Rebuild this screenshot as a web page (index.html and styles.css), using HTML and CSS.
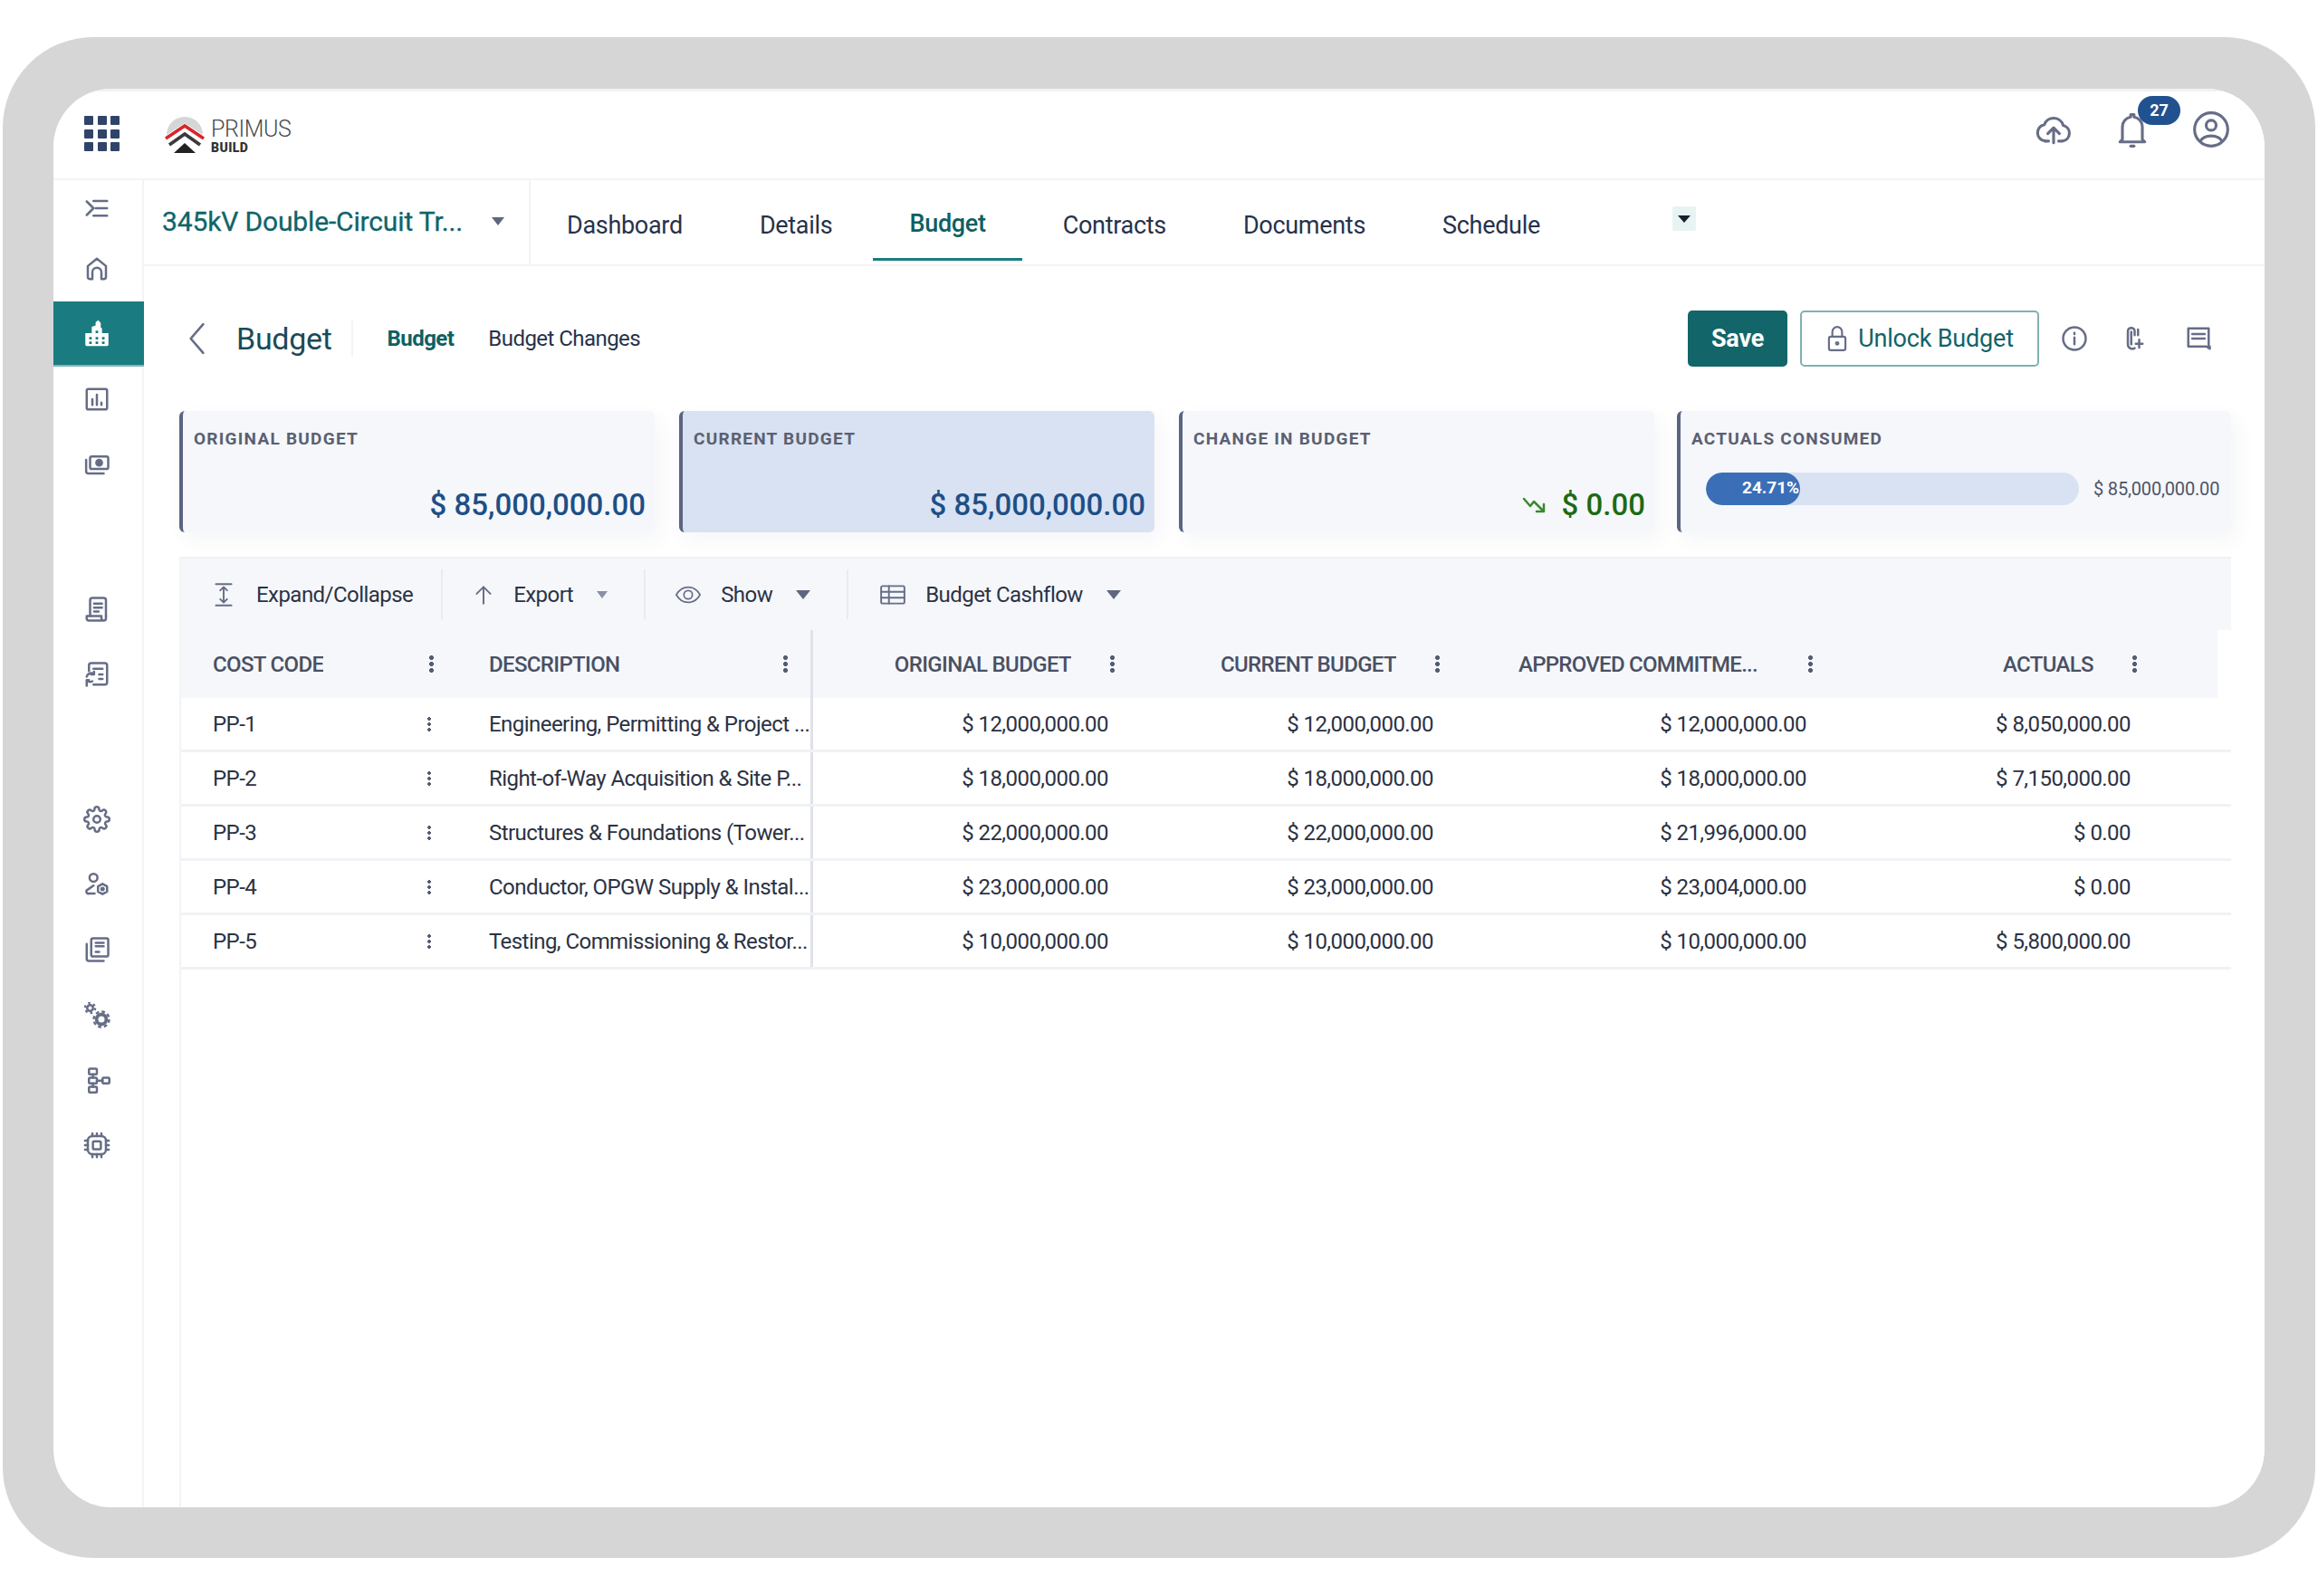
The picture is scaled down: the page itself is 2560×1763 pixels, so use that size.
FILE: index.html
```html
<!DOCTYPE html>
<html lang="en">
<head>
    <meta charset="UTF-8">
    <title>Primus Build - Budget</title>
    <link rel="stylesheet" href="styles.css">
</head>
<body>
<svg class="sprite" aria-hidden="true">
    <symbol id="gear" viewBox="0 0 24 24"><circle cx="12" cy="12" r="3"/><path d="M19.4 15a1.65 1.65 0 0 0 .33 1.82l.06.06a2 2 0 0 1-2.83 2.83l-.06-.06a1.65 1.65 0 0 0-2.82 1.18V21a2 2 0 0 1-4 0v-.09A1.65 1.65 0 0 0 7.18 19.73l-.06.06a2 2 0 0 1-2.83-2.83l.06-.06a1.65 1.65 0 0 0-1.18-2.82H3a2 2 0 0 1 0-4h.09A1.65 1.65 0 0 0 4.27 7.18l-.06-.06a2 2 0 0 1 2.83-2.83l.06.06A1.65 1.65 0 0 0 9.92 3.17V3a2 2 0 0 1 4 0v.09a1.65 1.65 0 0 0 2.82 1.18l.06-.06a2 2 0 0 1 2.83 2.83l-.06.06a1.65 1.65 0 0 0 1.18 2.82H21a2 2 0 0 1 0 4h-.09A1.65 1.65 0 0 0 19.4 15z"/></symbol>
</svg>
<div class="frame">
    <div class="app">
        <header class="topbar">
            <div class="waffle"><i></i><i></i><i></i><i></i><i></i><i></i><i></i><i></i><i></i></div>
            <div class="logo">
                <svg class="logo-mark" viewBox="0 0 46 46">
                    <path d="M3 24a20 20 0 0 1 40 0l-20-13z" fill="#d5d6d8"/>
                    <path d="M2 28L23 14l21 14" fill="none" stroke="#d8262c" stroke-width="3.6"/>
                    <path d="M6 35l17-12 17 12" fill="none" stroke="#3b3b3d" stroke-width="3.8"/>
                    <path d="M11 44l12-11 12 11z" fill="#222"/>
                </svg>
                <div class="logo-text">
                    <span class="logo-name">PRIMUS</span>
                    <span class="logo-sub">BUILD</span>
                </div>
            </div>
            <div class="top-icons">
                <svg class="icon-lg" viewBox="0 0 24 24"><path d="M7 19a5 5 0 0 1-.6-9.9A6 6 0 0 1 17.8 9.6 4.8 4.8 0 0 1 17.5 19H15"/><path d="M12 20v-8M8.500 14.500L12 11l3.500 3.500"/><path d="M7 19h2"/></svg>
                <div class="bell">
                    <svg class="icon-lg" viewBox="0 0 24 24"><path d="M6 18V10.500a6 6 0 0 1 5-6V3h2v1.500a6 6 0 0 1 5 6V18l1.500 1.500h-15z"/><path d="M11 22h2"/></svg>
                    <span class="badge">27</span>
                </div>
                <svg class="icon-lg" viewBox="0 0 24 24"><circle cx="12" cy="12" r="10"/><circle cx="12" cy="9.500" r="3"/><path d="M5.500 19a7 5 0 0 1 13 0"/></svg>
            </div>
        </header>
        <div class="workspace">
            <nav class="sidebar">
                <div class="side-item side-toggle"><svg viewBox="0 0 24 24"><path d="M3 6l6 6-6 6M9 5.500h12M11 12h10M9 18.500h12"/></svg></div>
                <div class="side-item"><svg viewBox="0 0 24 24"><path d="M12 3l8 6.500V19a2 2 0 0 1-2 2h-2v-6a4 4 0 0 0-8 0v6H6a2 2 0 0 1-2-2V9.500z"/></svg></div>
                <div class="side-item active"><svg viewBox="0 0 24 24"><path class="solid" d="M3 12h5V7l3-1V3.500L13 2l2 2v4h1v4h5v9a1 1 0 0 1-1 1H4a1 1 0 0 1-1-1z"/><path class="holes" d="M6 15h2v2H6zM6 18.500h2v2H6zM11 10h2v2h-2zM11 15h2v2h-2zM11 18.500h2v2h-2zM16 15h2v2h-2zM16 18.500h2v2h-2z"/></svg></div>
                <div class="side-item"><svg viewBox="0 0 24 24"><rect x="3" y="3" width="18" height="18" rx="1.500"/><path d="M8 17v-5M12 17V8M16 17v-2"/></svg></div>
                <div class="side-item"><svg viewBox="0 0 24 24"><rect x="6" y="5" width="16" height="11" rx="1.500"/><circle class="dot" cx="14" cy="10.500" r="2.500"/><path d="M2.500 8v10a2 2 0 0 0 2 2H18"/></svg></div>

                <div class="side-item gap"><svg viewBox="0 0 24 24"><path d="M6 18V4a2 2 0 0 1 2-2h10a2 2 0 0 1 2 2v14"/><path d="M9.500 7h7M9.500 10.500h7M9.500 14h4"/><path d="M3 18h13v2a2 2 0 0 0 2 2H5a2 2 0 0 1-2-2zM20 18v2a2 2 0 0 1-2 2"/></svg></div>
                <div class="side-item"><svg viewBox="0 0 24 24"><path d="M5 9V4a2 2 0 0 1 2-2h12a2 2 0 0 1 2 2v15a2 2 0 0 1-2 2H9"/><path d="M9 7h8M14 12h3M14 16h3"/><path d="M3 14a4 4 0 0 1 6-2.500M9.500 9.500v2.500H7M8 18a4 4 0 0 1-5-1M3 22v-5h2"/></svg></div>

                <div class="side-item gap"><svg viewBox="0 0 24 24"><use href="#gear"/></svg></div>
                <div class="side-item"><svg viewBox="0 0 24 24"><circle cx="9" cy="6" r="3.500"/><path d="M9 13l-5 3.500a1.800 1.800 0 0 0 1 3.500h5"/><path d="M17 11.500l4 2.200v4.600l-4 2.200-4-2.200v-4.600z"/><circle class="dot" cx="17" cy="16" r="1"/></svg></div>
                <div class="side-item"><svg viewBox="0 0 24 24"><rect x="7" y="2" width="15" height="16" rx="1.500"/><path d="M11 6h7M11 9h7M11 14h3"/><path d="M3 7v13a2 2 0 0 0 2 2h13"/></svg></div>
                <div class="side-item"><svg class="gears" viewBox="0 0 24 24"><circle cx="6" cy="6" r="2.600"/><circle class="teeth-s" cx="6" cy="6" r="4.400"/><circle class="ring" cx="16" cy="16" r="4.300"/><circle class="teeth-l" cx="16" cy="16" r="6.800"/></svg></div>
                <div class="side-item"><svg viewBox="0 0 24 24"><rect x="5" y="2" width="7" height="5" rx="1"/><rect x="5" y="10" width="7" height="5" rx="1"/><rect x="5" y="18" width="7" height="5" rx="1"/><rect x="17" y="10" width="6" height="5" rx="1"/><path d="M12 12.500h5M8.500 7v3M8.500 15v3"/></svg></div>
                <div class="side-item"><svg viewBox="0 0 24 24"><rect x="4" y="4" width="16" height="16" rx="4"/><rect x="8.500" y="8.500" width="7" height="7" rx="1"/><path d="M8 1.500V4M12 1.500V4M16 1.500V4M8 20v2.500M12 20v2.500M16 20v2.500M1.500 8H4M1.500 12H4M1.500 16H4M20 8h2.500M20 12h2.500M20 16h2.500"/></svg></div>
            </nav>
            <main class="main">
                <div class="tabbar">
                    <div class="project">
                        <span class="project-name">345kV Double-Circuit Tr...</span>
                        <span class="caret"></span>
                    </div>
                    <div class="tabs">
                        <a class="tab">Dashboard</a>
                        <a class="tab">Details</a>
                        <a class="tab current">Budget</a>
                        <a class="tab">Contracts</a>
                        <a class="tab">Documents</a>
                        <a class="tab">Schedule</a>
                    </div>
                    <div class="more-tabs"><span class="caret dark"></span></div>
                </div>
                <div class="content">
                    <div class="page-head">
                        <svg class="back" viewBox="0 0 20 36"><path d="M17 3L4 18l13 15"/></svg>
                        <h1 class="page-title">Budget</h1>
                        <a class="subtab on">Budget</a>
                        <a class="subtab">Budget Changes</a>
                        <div class="actions">
                            <button class="btn-save">Save</button>
                            <button class="btn-unlock">
                                <svg viewBox="0 0 24 28"><path d="M7 12V7a5 5 0 0 1 10 0v5"/><rect x="3.500" y="12" width="17" height="14" rx="2"/><circle cx="12" cy="19" r="1.300"/></svg>
                                Unlock Budget
                            </button>
                            <svg class="act-icon" viewBox="0 0 24 24"><circle cx="12" cy="12" r="10"/><path d="M12 11v6M12 7v1"/></svg>
                            <svg class="act-icon" viewBox="0 0 24 24"><path d="M14 9V5.500a3 3 0 0 0-6 0V17a4 4 0 0 0 6 3.500"/><path d="M11 6v11"/><path d="M18 13v7M15 16.500h6M17 4v5"/></svg>
                            <svg class="act-icon" viewBox="0 0 24 24"><path d="M3 3h18v16h1v2l-3-2H3z"/><path d="M6.500 8h11M6.500 12h11"/></svg>
                        </div>
                    </div>

                    <div class="cards">
                        <section class="card">
                            <h2 class="card-label">ORIGINAL BUDGET</h2>
                            <div class="card-value">$ 85,000,000.00</div>
                        </section>
                        <section class="card selected">
                            <h2 class="card-label">CURRENT BUDGET</h2>
                            <div class="card-value">$ 85,000,000.00</div>
                        </section>
                        <section class="card">
                            <h2 class="card-label">CHANGE IN BUDGET</h2>
                            <div class="card-value green">
                                <svg class="trend" viewBox="0 0 28 22"><path d="M2 4l7 8 4-5 11 11M24 10v8h-8"/></svg>
                                <span>$ 0.00</span>
                            </div>
                        </section>
                        <section class="card wide">
                            <h2 class="card-label">ACTUALS CONSUMED</h2>
                            <div class="consumed">
                                <div class="bar"><div class="bar-fill"><span>24.71%</span></div></div>
                                <span class="bar-total">$ 85,000,000.00</span>
                            </div>
                        </section>
                    </div>

                    <div class="grid-wrap">
                        <div class="toolbar">
                            <div class="tool first">
                                <svg viewBox="0 0 24 28"><path d="M4 3h16M4 25h16M12 6v16M8.500 9.500L12 6l3.500 3.500M8.500 18.500L12 22l3.500-3.500"/></svg>
                                <span>Expand/Collapse</span>
                            </div>
                            <div class="tool">
                                <svg viewBox="0 0 24 24"><path d="M12 21V4M5 11l7-7 7 7"/></svg>
                                <span>Export</span>
                                <span class="caret small"></span>
                            </div>
                            <div class="tool">
                                <svg class="eye" viewBox="0 0 32 24"><path d="M2 12C6 5 11 3 16 3s10 2 14 9c-4 7-9 9-14 9S6 19 2 12z"/><circle cx="16" cy="12" r="5"/></svg>
                                <span>Show</span>
                                <span class="caret"></span>
                            </div>
                            <div class="tool last">
                                <svg class="eye" viewBox="0 0 28 24"><rect x="2" y="3" width="24" height="18" rx="1.500"/><path d="M2 9h24M2 15h24M10 3v18"/></svg>
                                <span>Budget Cashflow</span>
                                <span class="caret"></span>
                            </div>
                        </div>

                        <div class="row head">
                            <div class="cell text"><span class="label">COST CODE</span><i class="kebab"></i></div>
                            <div class="cell text sep"><span class="label">DESCRIPTION</span><i class="kebab"></i></div>
                            <div class="cell num"><span class="label">ORIGINAL BUDGET</span><i class="kebab"></i></div>
                            <div class="cell num"><span class="label">CURRENT BUDGET</span><i class="kebab"></i></div>
                            <div class="cell num"><span class="label cut">APPROVED COMMITME...</span><i class="kebab"></i></div>
                            <div class="cell num"><span class="label">ACTUALS</span><i class="kebab"></i></div>
                            <div class="gutter"></div>
                        </div>

                        <div class="row">
                            <div class="cell text"><span>PP-1</span><i class="kebab thin"></i></div>
                            <div class="cell text sep"><span>Engineering, Permitting &amp; Project ...</span></div>
                            <div class="cell num">$ 12,000,000.00</div>
                            <div class="cell num">$ 12,000,000.00</div>
                            <div class="cell num">$ 12,000,000.00</div>
                            <div class="cell num">$ 8,050,000.00</div>
                        </div>
                        <div class="row">
                            <div class="cell text"><span>PP-2</span><i class="kebab thin"></i></div>
                            <div class="cell text sep"><span>Right-of-Way Acquisition &amp; Site P...</span></div>
                            <div class="cell num">$ 18,000,000.00</div>
                            <div class="cell num">$ 18,000,000.00</div>
                            <div class="cell num">$ 18,000,000.00</div>
                            <div class="cell num">$ 7,150,000.00</div>
                        </div>
                        <div class="row">
                            <div class="cell text"><span>PP-3</span><i class="kebab thin"></i></div>
                            <div class="cell text sep"><span>Structures &amp; Foundations (Tower...</span></div>
                            <div class="cell num">$ 22,000,000.00</div>
                            <div class="cell num">$ 22,000,000.00</div>
                            <div class="cell num">$ 21,996,000.00</div>
                            <div class="cell num">$ 0.00</div>
                        </div>
                        <div class="row">
                            <div class="cell text"><span>PP-4</span><i class="kebab thin"></i></div>
                            <div class="cell text sep"><span>Conductor, OPGW Supply &amp; Instal...</span></div>
                            <div class="cell num">$ 23,000,000.00</div>
                            <div class="cell num">$ 23,000,000.00</div>
                            <div class="cell num">$ 23,004,000.00</div>
                            <div class="cell num">$ 0.00</div>
                        </div>
                        <div class="row">
                            <div class="cell text"><span>PP-5</span><i class="kebab thin"></i></div>
                            <div class="cell text sep"><span>Testing, Commissioning &amp; Restor...</span></div>
                            <div class="cell num">$ 10,000,000.00</div>
                            <div class="cell num">$ 10,000,000.00</div>
                            <div class="cell num">$ 10,000,000.00</div>
                            <div class="cell num">$ 5,800,000.00</div>
                        </div>
                    </div>
                </div>
            </main>
        </div>
    </div>
</div>
</body>
</html>
```

FILE: styles.css
```css
* {
    box-sizing: border-box;
}

body {
    margin: 0;
    height: 1763px;
    padding: 41px 3px 0;
    background: #fff;
    font-family: Roboto, "Liberation Sans", sans-serif;
    color: #2b3346;
    overflow: hidden;
}

.sprite {
    display: none;
}

/* Grey device frame */
.frame {
    width: 2554px;
    height: 1680px;
    padding: 57px 56px 56px;
    background: #d6d6d6;
    border-radius: 100px;
}

.app {
    height: 100%;
    display: flex;
    flex-direction: column;
    background: #fff;
    border-radius: 64px;
    overflow: hidden;
}

svg {
    fill: none;
    stroke: #666d86;
    stroke-width: 2;
    stroke-linecap: round;
    stroke-linejoin: round;
}

/* Top bar */
.topbar {
    height: 101px;
    flex: none;
    display: flex;
    align-items: center;
    padding: 0 37px 0 34px;
    border-top: 3px solid #f1f1f1;
    border-bottom: 2px solid #f3f4f6;
}

.waffle {
    display: grid;
    grid-template-columns: repeat(3, 10px);
    gap: 4.500px;
    margin-top: -3px;
}

.waffle i {
    height: 10px;
    background: #2f4468;
    border-radius: 1px;
}

.logo {
    display: flex;
    align-items: center;
    gap: 6px;
    margin-left: 49px;
    margin-top: -3px;
}

.logo-mark {
    width: 46px;
    height: 46px;
    stroke: none;
    stroke-linecap: butt;
    stroke-linejoin: miter;
}

.logo-text {
    display: flex;
    flex-direction: column;
    padding-top: 4px;
}

.logo-name {
    font-size: 25px;
    font-weight: 300;
    line-height: 26px;
    color: #4a4a4c;
    letter-spacing: -.4px;
}

.logo-sub {
    font-size: 14px;
    font-weight: 900;
    line-height: 14px;
    color: #333;
    letter-spacing: .4px;
}

.top-icons {
    margin-left: auto;
    display: flex;
    align-items: center;
    gap: 43px;
    margin-top: -13px;
}

.icon-lg {
    width: 44px;
    height: 44px;
    display: block;
    stroke-width: 1.700;
}

.bell {
    position: relative;
}

.badge {
    position: absolute;
    top: -15px;
    left: 28px;
    width: 47px;
    height: 32px;
    border-radius: 16px;
    background: #21528f;
    color: #fff;
    font-size: 18px;
    font-weight: 700;
    line-height: 32px;
    text-align: center;
}

.workspace {
    flex: 1;
    display: flex;
    min-height: 0;
}

/* Left rail */
.sidebar {
    width: 100px;
    flex: none;
    border-right: 2px solid #f3f4f6;
}

.side-item {
    height: 72px;
    display: flex;
    align-items: center;
    justify-content: center;
    padding-right: 3px;
}

.side-item svg {
    width: 30px;
    height: 30px;
}

.side-toggle {
    height: 62px;
}

.side-item.gap {
    margin-top: 88px;
}

.side-item.active {
    margin-right: -2px;
    background: #1a7c80;
    border-bottom: 2px solid #7cb7b9;
    padding-right: 5px;
}

.side-item.active svg {
    width: 34px;
    height: 34px;
}

.side-item.active .solid {
    fill: #fff;
    stroke: none;
}

.side-item.active .holes {
    fill: #1a7c80;
    stroke: none;
}

.dot {
    fill: #666d86;
}

.gears .ring {
    stroke-width: 3;
}

.gears .teeth-s {
    stroke-linecap: butt;
    stroke-dasharray: 2 2.610;
}

.gears .teeth-l {
    stroke-linecap: butt;
    stroke-dasharray: 3 2.340;
}

/* Project select and tabs */
.main {
    flex: 1;
    min-width: 0;
    display: flex;
    flex-direction: column;
}

.tabbar {
    height: 95px;
    flex: none;
    display: flex;
    border-bottom: 2px solid #f3f4f6;
}

.project {
    width: 427px;
    flex: none;
    display: flex;
    align-items: center;
    padding: 0 0 0 20px;
    border-right: 2px solid #f3f4f6;
}

.project-name {
    font-size: 30px;
    color: #0f6469;
    letter-spacing: -.15px;
    -webkit-text-stroke: .3px #0f6469;
    width: 364px;
    margin-top: -3px;
    white-space: nowrap;
}

.project .caret {
    margin-top: -3px;
    border-left-width: 7px;
    border-right-width: 7px;
    border-top-width: 9px;
}

.caret {
    display: inline-block;
    width: 0;
    height: 0;
    border-left: 8px solid transparent;
    border-right: 8px solid transparent;
    border-top: 10px solid #5f6680;
}

.caret.small {
    border-left-width: 6px;
    border-right-width: 6px;
    border-top-width: 8px;
    border-top-color: #8a90a5;
}

.caret.dark {
    border-top-color: #14202c;
    border-left-width: 7px;
    border-right-width: 7px;
    border-top-width: 8px;
}

.tabs {
    display: flex;
    align-items: flex-start;
}

.tab {
    display: flex;
    align-items: center;
    height: 89px;
    padding: 14px 40px 0;
    margin-right: 5px;
    font-size: 27px;
    letter-spacing: -.3px;
    color: #27324a;
    border-bottom: 3px solid transparent;
    white-space: nowrap;
}

.tab.current {
    color: #0f5f63;
    font-weight: 500;
    border-bottom-color: #1a7c80;
    padding-top: 9px;
}

.more-tabs {
    width: 26px;
    height: 27px;
    margin: 29px 0 0 101px;
    display: flex;
    align-items: center;
    justify-content: center;
    background: #e8f3f3;
    border-radius: 2px;
}

/* Page content */
.content {
    flex: 1;
    min-height: 0;
    display: flex;
    flex-direction: column;
    padding: 0 37px 0 39px;
}

.page-head {
    height: 160px;
    flex: none;
    display: flex;
    align-items: center;
}

.back {
    width: 22px;
    height: 38px;
    margin-left: 8px;
    stroke-width: 2.500;
}

.page-title {
    margin: 0 0 0 33px;
    font-size: 34px;
    font-weight: 400;
    color: #1b4a57;
    padding-right: 21px;
    border-right: 2px solid #f3f4f6;
    letter-spacing: -.3px;
}

.subtab {
    font-size: 24px;
    letter-spacing: -.55px;
    color: #27324a;
    margin-left: 38px;
    white-space: nowrap;
}

.subtab.on {
    color: #0f5f63;
    font-weight: 700;
}

.actions {
    margin-left: auto;
    display: flex;
    align-items: center;
    padding-right: 21px;
}

.btn-save,
.btn-unlock {
    height: 62px;
    font-family: inherit;
    font-size: 27px;
    letter-spacing: -.2px;
    border-radius: 5px;
}

.btn-save {
    width: 110px;
    background: #12666a;
    border: 0;
    color: #fff;
    font-weight: 700;
}

.btn-unlock {
    width: 264px;
    margin-left: 14px;
    display: flex;
    align-items: center;
    justify-content: center;
    gap: 10px;
    background: #fff;
    border: 2px solid #7fb0b3;
    color: #0f6469;
}

.btn-unlock svg {
    width: 26px;
    height: 30px;
}

.act-icon {
    width: 30px;
    height: 30px;
}

.btn-unlock + .act-icon {
    margin-left: 24px;
}

.act-icon + .act-icon {
    margin-left: 34px;
}

.act-icon + .act-icon + .act-icon {
    margin-left: 43px;
}

/* Summary cards */
.cards {
    height: 134px;
    flex: none;
    display: flex;
    gap: 27px;
}

.card {
    width: 525px;
    flex: none;
    display: flex;
    flex-direction: column;
    padding: 18px 10px 0 12px;
    background: #f5f7fb;
    border-left: 4px solid #5a6583;
    border-radius: 6px;
    box-shadow: 6px 8px 22px rgba(40, 50, 90, .05);
}

.card.selected {
    background: #d9e2f3;
}

.card.wide {
    width: 612px;
    margin-left: -2px;
}

.card-label {
    margin: 0;
    font-size: 19px;
    font-weight: 700;
    line-height: 26px;
    letter-spacing: 1.250px;
    color: #5a6070;
    white-space: nowrap;
}

.card-value {
    margin-top: 40px;
    display: flex;
    align-items: center;
    justify-content: flex-end;
    font-size: 33px;
    font-weight: 500;
    line-height: 40px;
    color: #1d4f86;
}

.card-value.green {
    color: #1d6a12;
}

.trend {
    width: 28px;
    height: 22px;
    margin-right: 16px;
    stroke: #3a8a2e;
    stroke-width: 2.500;
}

.consumed {
    display: flex;
    align-items: center;
    gap: 16px;
    margin: 24px 0 0 16px;
}

.bar {
    width: 412px;
    height: 36px;
    background: #d9e2f3;
    border-radius: 18px;
    overflow: hidden;
}

.bar-fill {
    width: 104px;
    height: 100%;
    padding-left: 40px;
    background: #3a6fb8;
    border-radius: 18px;
    overflow: hidden;
    white-space: nowrap;
    font-size: 19px;
    font-weight: 700;
    line-height: 34px;
    color: #fff;
}

.bar-total {
    font-size: 20px;
    color: #4e5568;
    letter-spacing: -.17px;
    white-space: nowrap;
}

/* Budget grid */
.grid-wrap {
    flex: 1;
    margin-top: 27px;
    border-left: 2px solid #f3f4f6;
}

.toolbar {
    height: 81px;
    display: flex;
    align-items: center;
    background: #f5f7fb;
    border-top: 2px solid #eff1f5;
}

.tool {
    height: 55px;
    display: flex;
    align-items: center;
    font-size: 24px;
    letter-spacing: -.55px;
    color: #2b3346;
    padding: 0 40px 0 32px;
    border-right: 2px solid #e9ebf0;
    white-space: nowrap;
}

.tool svg {
    width: 26px;
    height: 26px;
    margin-right: 20px;
    stroke-width: 1.800;
}

.tool svg.eye {
    width: 30px;
    margin-right: 21px;
}

.tool .caret {
    margin-left: 26px;
}

.tool.first {
    padding-left: 34px;
    padding-right: 31px;
}

.tool.first svg {
    height: 30px;
    margin-right: 23px;
}

.tool.last {
    border-right: 0;
    padding-left: 34px;
}

.row {
    height: 60px;
    display: grid;
    grid-template-columns: 316px 382px 345px 359px 412px 358px 1fr;
    border-bottom: 3px solid #f1f2f5;
    font-size: 24px;
    letter-spacing: -.55px;
    color: #2b3244;
}

.row.head {
    height: 75px;
    background: #f5f7fb;
    border-bottom: 0;
    font-weight: 500;
    letter-spacing: -.65px;
    color: #4a5063;
}

.cell {
    display: flex;
    align-items: center;
    white-space: nowrap;
    min-width: 0;
}

.cell.text {
    justify-content: space-between;
}

.cell.text:first-child {
    padding: 0 40px 0 35px;
}

.head .cell.text:first-child {
    padding-right: 37px;
}

.cell.sep {
    padding: 0 0 0 24px;
    border-right: 3px solid #dfe2e8;
    overflow: hidden;
}

.head .cell.sep {
    padding-right: 25px;
}

.cell.num {
    justify-content: flex-end;
    padding-right: 19px;
}

.head .cell.num {
    padding-right: 12px;
}

.label {
    overflow: hidden;
}

.head .num .label {
    margin-right: 43px;
}

.head .num .label.cut {
    margin-right: 56px;
    letter-spacing: -.72px;
}

.gutter {
    width: 15px;
    justify-self: end;
    background: #fff;
}

.kebab {
    flex: none;
    width: 5px;
    height: 21px;
    background: radial-gradient(circle, #555c70 2.2px, transparent 2.600px) 0 0 / 5px 7px repeat-y;
}

.kebab.thin {
    width: 4px;
    height: 18px;
    background: radial-gradient(circle, #555c70 1.700px, transparent 2.100px) 0 0 / 4px 6px repeat-y;
}
```
